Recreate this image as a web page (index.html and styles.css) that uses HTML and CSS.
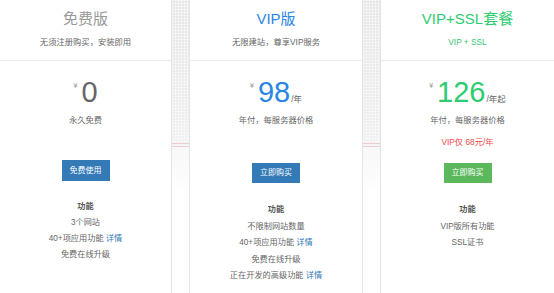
FILE: index.html
```html
<!DOCTYPE html>
<html lang="zh-CN">
<head>
<meta charset="utf-8">
<title>版本价格</title>
<link rel="stylesheet" href="styles.css">
</head>
<body>
<div class="plans">
  <section class="plan plan-free">
    <header class="plan-head">
      <h2 class="plan-title">免费版</h2>
      <p class="plan-sub">无须注册购买，安装即用</p>
    </header>
    <div class="plan-price"><span class="cur">¥</span><span class="num">0</span></div>
    <p class="plan-note">永久免费</p>
    <div class="plan-extra"></div>
    <div class="plan-cta"><a class="btn btn-blue">免费使用</a></div>
    <ul class="plan-feats">
      <li class="feat-head">功能</li>
      <li>3个网站</li>
      <li>40+项应用功能 <a class="link">详情</a></li>
      <li>免费在线升级</li>
    </ul>
  </section>
  <div class="gutter"></div>
  <section class="plan plan-vip">
    <header class="plan-head">
      <h2 class="plan-title">VIP版</h2>
      <p class="plan-sub">无限建站，尊享VIP服务</p>
    </header>
    <div class="plan-price"><span class="cur">¥</span><span class="num">98</span><span class="unit">/年</span></div>
    <p class="plan-note">年付，每服务器价格</p>
    <div class="plan-extra"></div>
    <div class="plan-cta"><a class="btn btn-blue">立即购买</a></div>
    <ul class="plan-feats">
      <li class="feat-head">功能</li>
      <li>不限制网站数量</li>
      <li>40+项应用功能 <a class="link">详情</a></li>
      <li>免费在线升级</li>
      <li>正在开发的高级功能 <a class="link">详情</a></li>
    </ul>
  </section>
  <div class="gutter"></div>
  <section class="plan plan-ssl">
    <header class="plan-head">
      <h2 class="plan-title">VIP+SSL套餐</h2>
      <p class="plan-sub">VIP + SSL</p>
    </header>
    <div class="plan-price"><span class="cur">¥</span><span class="num">126</span><span class="unit">/年起</span></div>
    <p class="plan-note">年付，每服务器价格</p>
    <div class="plan-extra"><p class="promo">VIP仅 68元/年</p></div>
    <div class="plan-cta"><a class="btn btn-green">立即购买</a></div>
    <ul class="plan-feats">
      <li class="feat-head">功能</li>
      <li>VIP版所有功能</li>
      <li>SSL证书</li>
    </ul>
  </section>
</div>
</body>
</html>
```

FILE: styles.css
```css
* { box-sizing: border-box; }
html, body {
  margin: 0;
  padding: 0;
  background: #fff;
}
body {
  width: 554px;
  height: 293px;
  overflow: hidden;
  font-family: "Liberation Sans", "Noto Sans CJK SC", sans-serif;
  color: #666;
}
p, h2, ul { margin: 0; padding: 0; }
ul { list-style: none; }

.plans {
  display: flex;
  height: 293px;
}
.plan {
  text-align: center;
  height: 100%;
}
.plan-free { width: 171px; }
.plan-vip { width: 172px; }
.plan-ssl { width: 173px; }

.gutter {
  width: 19px;
  height: 100%;
  border-left: 1px solid #e4e4e4;
  border-right: 1px solid #e4e4e4;
  background-image:
    linear-gradient(#fff 0 0),
    linear-gradient(rgba(240,190,190,.7) 0 0),
    linear-gradient(rgba(240,190,190,.7) 0 0),
    repeating-linear-gradient(90deg, rgba(255,255,255,.45) 0 1px, transparent 1px 3px),
    repeating-linear-gradient(0deg, rgba(255,255,255,.45) 0 1px, transparent 1px 3px),
    linear-gradient(#e7e7e7 0, #ececec 100px, #f0f0f0 142px, #f8f8f8 148px, #fbfbfb 175px, #fff 190px);
  background-size:
    100% 0,
    100% 1px,
    100% 1px,
    100% 142px,
    100% 142px,
    100% 100%;
  background-position:
    0 0,
    0 143px,
    0 146px,
    0 0,
    0 0,
    0 0;
  background-repeat: no-repeat;
}

.plan-head {
  height: 61px;
  border-bottom: 1px solid #ebebeb;
  padding-top: 9px;
}
.plan-title {
  font-weight: normal;
  font-size: 15px;
  line-height: 20px;
}
.plan-free .plan-title { color: #999; }
.plan-vip .plan-title { color: #2b86e3; }
.plan-ssl .plan-title { color: #2ecc71; }

.plan-sub {
  margin-top: 7px;
  font-size: 8.3px;
  line-height: 12px;
  color: #666;
}
.plan-ssl .plan-sub { color: #3cbf74; }

.plan-price {
  margin-top: 13px;
  height: 36px;
  line-height: 36px;
  white-space: nowrap;
}
.cur {
  display: inline-block;
  vertical-align: top;
  font-size: 7px;
  line-height: 12px;
  margin-top: 6px;
  margin-right: 4px;
  color: #999;
}
.num {
  font-size: 29px;
  letter-spacing: 0;
}
.plan-free .num { color: #666; }
.plan-vip .num { color: #2b86e3; }
.plan-ssl .num { color: #2ecc71; }
.unit {
  font-size: 8.5px;
  color: #666;
  margin-left: 1px;
}

.plan-note {
  margin-top: 4px;
  font-size: 8.3px;
  line-height: 12px;
  color: #666;
}
.plan-extra {
  height: 35px;
  padding-top: 10px;
}
.promo {
  font-size: 8.3px;
  line-height: 12px;
  color: #f04a4a;
}

.plan-cta {
  height: 20px;
}
.plan-free .plan-cta { margin-top: -2px; }
.btn {
  display: inline-block;
  width: 48px;
  height: 20px;
  line-height: 20px;
  font-size: 8px;
  color: #fff;
  text-decoration: none;
}
.plan-free .btn { height: 21px; line-height: 21px; }
.btn-blue { background: #337ab7; border: 0; }
.btn-green { background: #5cb85c; }

.plan-feats {
  margin-top: 21px;
  font-size: 8.2px;
  line-height: 16.5px;
  color: #666;
}
.plan-free .plan-feats { margin-top: 20px; line-height: 16px; }
.feat-head {
  font-weight: bold;
  color: #555;
}
.link { color: #337ab7; }
```
